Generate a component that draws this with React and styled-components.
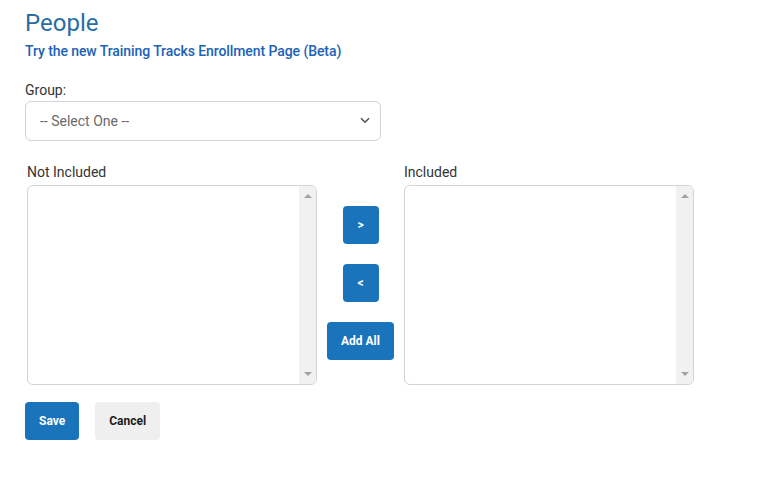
import styled, { createGlobalStyle } from "styled-components";

const GlobalStyle = createGlobalStyle`
  body {
    margin: 0;
    background: #ffffff;
    font-family: Roboto, "Liberation Sans", Arial, sans-serif;
    color: #333333;
  }
`;

const Page = styled.div`
  padding: 9px 25px 40px;
`;

const Title = styled.h1`
  margin: 0;
  font-size: 24px;
  line-height: 29px;
  font-weight: 400;
  color: #2a6ca6;
`;

const BetaLink = styled.a`
  display: block;
  margin-top: 3px;
  font-size: 14px;
  line-height: 20px;
  font-weight: 500;
  letter-spacing: -0.08px;
  color: #1b62b8;
  text-decoration: none;
`;

const Label = styled.label`
  display: block;
  font-size: 14px;
  line-height: 20px;
  color: #333333;
`;

const GroupLabel = styled(Label)`
  margin-top: 19px;
  margin-bottom: 1px;
`;

const SelectWrap = styled.div`
  position: relative;
  width: 356px;
`;

const Select = styled.select`
  appearance: none;
  width: 100%;
  height: 40px;
  box-sizing: border-box;
  border: 1px solid #cfd3da;
  border-radius: 6px;
  background: #ffffff;
  padding: 0 14px;
  font-family: inherit;
  font-size: 14px;
  color: #6a6a6a;
`;

const Chevron = styled.svg`
  position: absolute;
  right: 11px;
  top: 16px;
  pointer-events: none;
`;

const DualList = styled.div`
  display: flex;
  margin-top: 21px;
  margin-left: 2px;
`;

const ListColumn = styled.div`
  display: flex;
  flex-direction: column;
  width: 290px;
`;

const ListLabel = styled(Label)`
  margin-bottom: 3px;
`;

const ListBox = styled.div`
  display: flex;
  height: 200px;
  box-sizing: border-box;
  border: 1px solid #cfd3da;
  border-radius: 6px;
  overflow: hidden;
  background: #ffffff;
`;

const ListContent = styled.div`
  flex: 1;
`;

const Track = styled.div`
  width: 17px;
  background: #f1f1f1;
  display: flex;
  flex-direction: column;
  justify-content: space-between;
  align-items: center;
  padding: 8px 0;
`;

const Arrow = styled.span`
  width: 0;
  height: 0;
  border-left: 4px solid transparent;
  border-right: 4px solid transparent;
  ${(p) =>
    p.$down
      ? "border-top: 4px solid #a3a3a3;"
      : "border-bottom: 4px solid #a3a3a3;"}
`;

const Mover = styled.div`
  width: 87px;
  padding-top: 44px;
  display: flex;
  flex-direction: column;
  align-items: center;
  gap: 20px;
`;

const Button = styled.button`
  height: 38px;
  min-width: ${(p) => p.$width || 0}px;
  padding: 0 14px;
  border: none;
  border-radius: 4px;
  font-family: inherit;
  font-size: 12px;
  font-weight: 700;
  cursor: pointer;
  background: ${(p) => (p.$secondary ? "#efefef" : "#1a74bb")};
  color: ${(p) => (p.$secondary ? "#1c1c1c" : "#ffffff")};
`;

const Actions = styled.div`
  display: flex;
  gap: 16px;
  margin-top: 17px;
`;

function ScrollList() {
  return (
    <ListBox>
      <ListContent />
      <Track>
        <Arrow />
        <Arrow $down />
      </Track>
    </ListBox>
  );
}

export default function App() {
  return (
    <Page>
      <GlobalStyle />
      <Title>People</Title>
      <BetaLink href="#">Try the new Training Tracks Enrollment Page (Beta)</BetaLink>

      <GroupLabel>Group:</GroupLabel>
      <SelectWrap>
        <Select defaultValue="">
          <option value="">-- Select One --</option>
        </Select>
        <Chevron width="10" height="7" viewBox="0 0 10 7">
          <path d="M1 1.2 L5 5.2 L9 1.2" fill="none" stroke="#555" strokeWidth="1.6" />
        </Chevron>
      </SelectWrap>

      <DualList>
        <ListColumn>
          <ListLabel>Not Included</ListLabel>
          <ScrollList />
        </ListColumn>
        <Mover>
          <Button $width={36}>&gt;</Button>
          <Button $width={36}>&lt;</Button>
          <Button>Add All</Button>
        </Mover>
        <ListColumn>
          <ListLabel>Included</ListLabel>
          <ScrollList />
        </ListColumn>
      </DualList>

      <Actions>
        <Button>Save</Button>
        <Button $secondary>Cancel</Button>
      </Actions>
    </Page>
  );
}
